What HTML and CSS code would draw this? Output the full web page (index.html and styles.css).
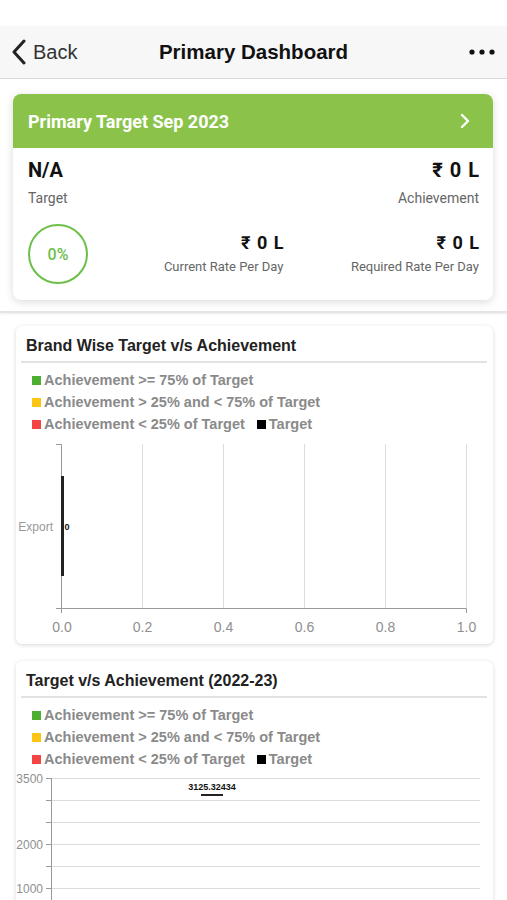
FILE: index.html
```html
<!DOCTYPE html>
<html lang="en">
<head>
    <meta charset="UTF-8">
    <meta name="viewport" content="width=device-width, initial-scale=1.0">
    <title>Primary Dashboard</title>
    <link rel="stylesheet" href="styles.css">
</head>
<body>
    <div class="status-bar"></div>

    <header class="nav-bar">
        <a class="nav-back" href="#">
            <svg width="16" height="26" viewBox="0 0 16 26"><path d="M13 2 L3 13 L13 24" fill="none" stroke="#222" stroke-width="3" stroke-linecap="round" stroke-linejoin="round"/></svg>
            <span>Back</span>
        </a>
        <h1 class="nav-title">Primary Dashboard</h1>
        <div class="nav-more">
            <svg width="26" height="6" viewBox="0 0 26 6"><circle cx="3" cy="3" r="2.6" fill="#111"/><circle cx="13" cy="3" r="2.6" fill="#111"/><circle cx="23" cy="3" r="2.6" fill="#111"/></svg>
        </div>
    </header>

    <div class="summary-card">
        <div class="summary-head">
            <span>Primary Target Sep 2023</span>
            <svg width="10" height="16" viewBox="0 0 10 16"><path d="M2 2 L8 8 L2 14" fill="none" stroke="#fff" stroke-width="2.4" stroke-linecap="round" stroke-linejoin="round"/></svg>
        </div>
        <div class="summary-body">
            <div class="summary-row">
                <div>
                    <div class="value">N/A</div>
                    <div class="label">Target</div>
                </div>
                <div class="align-right">
                    <div class="value money">₹ 0 L</div>
                    <div class="label">Achievement</div>
                </div>
            </div>
            <div class="rate-row">
                <div class="percent-ring">0%</div>
                <div class="align-right">
                    <div class="value money small">₹ 0 L</div>
                    <div class="label small">Current Rate Per Day</div>
                </div>
                <div class="align-right">
                    <div class="value money small">₹ 0 L</div>
                    <div class="label small">Required Rate Per Day</div>
                </div>
            </div>
        </div>
    </div>

    <div class="divider"></div>

    <section class="chart-card">
        <h2 class="chart-title">Brand Wise Target v/s Achievement</h2>
        <ul class="legend">
            <li><i class="sw green"></i>Achievement &gt;= 75% of Target</li>
            <li><i class="sw yellow"></i>Achievement &gt; 25% and &lt; 75% of Target</li>
            <li><i class="sw red"></i>Achievement &lt; 25% of Target <i class="sw black gap"></i>Target</li>
        </ul>
        <svg class="chart" width="466" height="206" viewBox="0 0 466 206">
            <g stroke="#dcdcdc" stroke-width="1">
                <line x1="121.5" y1="9" x2="121.5" y2="173"/>
                <line x1="202.5" y1="9" x2="202.5" y2="173"/>
                <line x1="283.5" y1="9" x2="283.5" y2="173"/>
                <line x1="364.5" y1="9" x2="364.5" y2="173"/>
                <line x1="445.5" y1="9" x2="445.5" y2="173"/>
            </g>
            <g stroke="#999" stroke-width="1" fill="none">
                <path d="M35 9.5 H40.5 V173.5"/>
                <path d="M35 173.5 H445.5 V178"/>
                <line x1="40.5" y1="173" x2="40.5" y2="178"/>
            </g>
            <rect x="40" y="41" width="3" height="100" fill="#222"/>
            <text x="32" y="96" class="axis-cat">Export</text>
            <text x="43.5" y="95" class="bar-value">0</text>
            <g class="axis-tick">
                <text x="41" y="197">0.0</text>
                <text x="121.5" y="197">0.2</text>
                <text x="202.5" y="197">0.4</text>
                <text x="283.5" y="197">0.6</text>
                <text x="364.5" y="197">0.8</text>
                <text x="445.5" y="197">1.0</text>
            </g>
        </svg>
    </section>

    <section class="chart-card">
        <h2 class="chart-title">Target v/s Achievement (2022-23)</h2>
        <ul class="legend">
            <li><i class="sw green"></i>Achievement &gt;= 75% of Target</li>
            <li><i class="sw yellow"></i>Achievement &gt; 25% and &lt; 75% of Target</li>
            <li><i class="sw red"></i>Achievement &lt; 25% of Target <i class="sw black gap"></i>Target</li>
        </ul>
        <svg class="chart" width="466" height="180" viewBox="0 0 466 180">
            <g stroke="#dcdcdc" stroke-width="1">
                <line x1="30" y1="8.5" x2="459" y2="8.5"/>
                <line x1="30" y1="30.5" x2="459" y2="30.5"/>
                <line x1="30" y1="52.5" x2="459" y2="52.5"/>
                <line x1="30" y1="74.5" x2="459" y2="74.5"/>
                <line x1="30" y1="96.5" x2="459" y2="96.5"/>
                <line x1="30" y1="118.5" x2="459" y2="118.5"/>
                <line x1="30" y1="140.5" x2="459" y2="140.5"/>
                <line x1="30" y1="162.5" x2="459" y2="162.5"/>
            </g>
            <g stroke="#999" stroke-width="1">
                <line x1="30.5" y1="8" x2="30.5" y2="180"/>
                <line x1="25" y1="8.5" x2="30" y2="8.5"/>
                <line x1="25" y1="30.5" x2="30" y2="30.5"/>
                <line x1="25" y1="52.5" x2="30" y2="52.5"/>
                <line x1="25" y1="74.5" x2="30" y2="74.5"/>
                <line x1="25" y1="96.5" x2="30" y2="96.5"/>
                <line x1="25" y1="118.5" x2="30" y2="118.5"/>
                <line x1="25" y1="140.5" x2="30" y2="140.5"/>
                <line x1="25" y1="162.5" x2="30" y2="162.5"/>
            </g>
            <g class="axis-val">
                <text x="22" y="12.5">3500</text>
                <text x="22" y="78.5">2000</text>
                <text x="22" y="122.5">1000</text>
            </g>
            <rect x="180" y="24" width="22" height="2" fill="#222"/>
            <text x="191" y="20" class="bar-label">3125.32434</text>
        </svg>
    </section>
</body>
</html>
```
FILE: styles.css
```css
body {
    margin: 0;
    background: #fff;
    font-family: "Liberation Sans", Arial, sans-serif;
    color: #222;
    overflow: hidden;
}

.status-bar {
    height: 26px;
    background: #fff;
}

.nav-bar {
    height: 52px;
    background: #f7f7f7;
    border-bottom: 1px solid #dadada;
    display: flex;
    align-items: center;
    justify-content: space-between;
    padding: 0 12px 0 11px;
    position: relative;
}

.nav-back {
    display: flex;
    align-items: center;
    gap: 6px;
    color: #333;
    text-decoration: none;
    font-size: 20px;
}

.nav-title {
    position: absolute;
    left: 0;
    right: 0;
    margin: 0;
    text-align: center;
    font-size: 20.5px;
    font-weight: bold;
    color: #111;
    pointer-events: none;
}

.nav-more {
    display: flex;
    align-items: center;
}

/* Summary card */
.summary-card {
    margin: 15px 14px 0 13px;
    border-radius: 8px;
    background: #fff;
    box-shadow: 0 2px 8px rgba(0,0,0,0.15);
    overflow: hidden;
    font-family: Roboto, "DejaVu Sans", sans-serif;
}

.summary-head {
    height: 54px;
    background: #8bc34a;
    color: #fff;
    display: flex;
    align-items: center;
    justify-content: space-between;
    padding: 0 23px 0 15px;
    font-size: 18px;
    font-weight: bold;
}

.summary-body {
    padding: 10px 14px 16px 15px;
}

.summary-row {
    display: flex;
    justify-content: space-between;
}

.align-right {
    text-align: right;
}

.value {
    font-size: 20px;
    font-weight: bold;
    line-height: 24px;
    color: #111;
}

.value.money {
    letter-spacing: 1px;
    margin-right: -1px;
}

.value.small {
    font-size: 18px;
    line-height: 22px;
}

.label {
    font-size: 14px;
    line-height: 18px;
    margin-top: 7px;
    color: #666;
}

.label.small {
    font-size: 13px;
    margin-top: 4px;
}

.rate-row {
    display: grid;
    grid-template-columns: 60px 1fr 1fr;
    align-items: center;
    margin-top: 17px;
}

.percent-ring {
    width: 56px;
    height: 56px;
    border: 2px solid #6cc04a;
    border-radius: 50%;
    display: flex;
    align-items: center;
    justify-content: center;
    color: #6cc04a;
    font-size: 16px;
    font-weight: 500;
}

.divider {
    height: 2px;
    margin-top: 11px;
    background: #e4e4e4;
    box-shadow: 0 1px 2px rgba(0,0,0,0.08);
}

/* Chart cards */
.chart-card {
    margin: 13px 14px 17px 16px;
    padding: 10px 6px 3px 5px;
    border-radius: 6px;
    background: #fff;
    box-shadow: 0 1px 4px rgba(0,0,0,0.16);
}

.chart-title {
    margin: 0;
    padding: 0 0 5px 5px;
    font-size: 16px;
    line-height: 20px;
    font-weight: bold;
    color: #222;
    border-bottom: 2px solid #e2e2e2;
}

.legend {
    list-style: none;
    margin: 6px 0 0;
    padding: 0 0 0 11px;
    font-size: 14.5px;
    line-height: 22px;
    font-weight: bold;
    color: #8a8a8a;
}

.sw {
    display: inline-block;
    width: 9px;
    height: 9px;
    margin-right: 3px;
}

.sw.gap {
    margin-left: 8px;
}

.green { background: #4caf32; }
.yellow { background: #fdc513; }
.red { background: #f44545; }
.black { background: #000; }

.chart {
    display: block;
    overflow: visible;
    font-family: "Liberation Sans", Arial, sans-serif;
}

.axis-cat {
    font-size: 12px;
    fill: #999;
    text-anchor: end;
}

.bar-value {
    font-size: 9px;
    font-weight: bold;
    fill: #111;
}

.axis-tick text {
    font-size: 14px;
    fill: #8f8f8f;
    text-anchor: middle;
}

.axis-val text {
    font-size: 12px;
    fill: #8f8f8f;
    text-anchor: end;
}

.bar-label {
    font-size: 9px;
    font-weight: bold;
    fill: #111;
    text-anchor: middle;
}
```
